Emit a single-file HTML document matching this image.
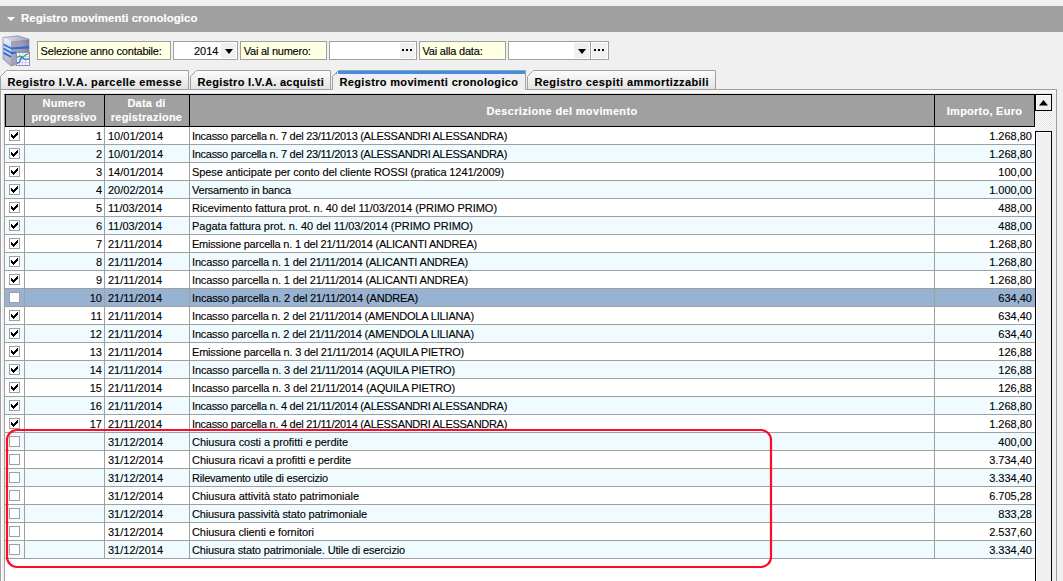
<!DOCTYPE html><html><head><meta charset="utf-8"><style>
*{margin:0;padding:0;box-sizing:border-box}
html,body{width:1063px;height:581px;overflow:hidden;background:#f0f0f0;font-family:'Liberation Sans', sans-serif;font-size:11px;color:#000}
.a{position:absolute}
.t{position:absolute;white-space:pre;line-height:13px;-webkit-text-stroke:0.12px currentColor}
.b{font-weight:bold}
</style></head><body>
<div class="a" style="left:0;top:6px;width:1063px;height:26px;background:#a0a0a0"></div>
<svg class="a" style="left:6px;top:16px" width="10" height="7"><path d="M1 1 L9 1 L5 5 Z" fill="#fff"/></svg>
<div class="t b" style="left:21px;top:12px;font-size:11.5px;color:#fff;letter-spacing:0.005px">Registro movimenti cronologico</div>
<svg class="a" style="left:0;top:32px" width="36" height="36" viewBox="0 32 36 36">
<defs><linearGradient id="gf" x1="0" x2="1" y1="0" y2="0"><stop offset="0" stop-color="#a4a4b6"/><stop offset="0.6" stop-color="#9a9ab0"/><stop offset="1" stop-color="#7c7c9c"/></linearGradient>
<linearGradient id="gs" x1="0" x2="0" y1="0" y2="1"><stop offset="0" stop-color="#f0f0fa"/><stop offset="1" stop-color="#a8a8c4"/></linearGradient>
<linearGradient id="gt" x1="0" x2="1"><stop offset="0" stop-color="#e4e4f2"/><stop offset="1" stop-color="#a0a0bc"/></linearGradient></defs>
<path d="M3 37.5 L18 35.8 L29 39.2 L11 41 Z" fill="url(#gt)"/>
<path d="M3 37.5 L11 41 L11 66 L3 59 Z" fill="url(#gs)"/>
<path d="M11 41 L29 39.2 L29 61 L11 66 Z" fill="url(#gf)"/>
<path d="M3 37.5 L18 35.8 L29 39.2 L29 61 L11 66 L3 59 Z" fill="none" stroke="#7a7a98" stroke-width="0.6"/>
<path d="M3.5 43.5 L11 47.5 L11 49 L3.5 45.5 Z M3.5 47.5 L11 51.8 L11 53.5 L3.5 49.5 Z M3.5 51.8 L11 56 L11 57.8 L3.5 54 Z" fill="#1a6ee6"/>
<path d="M11 47.5 L29 46.2 L29 48.6 L11 49.2 Z M11 52 L17 51.7 L17 53.6 L11 54 Z" fill="#1a6ee6"/>
<path d="M11 45 L29 44 M11 50.5 L29 50 M11 55.5 L17 55.2" stroke="#c0a0a0" stroke-width="0.5"/>
<rect x="16.5" y="52.5" width="13" height="13" fill="#f6f6fc" stroke="#9090b0"/>
<path d="M19.5 53 V65 M22.5 53 V65 M25.5 53 V65 M17 56.5 H29 M17 59.5 H29 M17 62.5 H29" stroke="#c4c4dc" stroke-width="0.7"/>
<path d="M17 57.5 L20 56 L22.5 57.5 L25.5 55 L29 53.5" stroke="#2cb82c" stroke-width="1.3" fill="none"/>
<path d="M17 63.5 L19.5 62 L21.5 57 L23.5 58.5 L26 59.5 L29 58.5" stroke="#2a6ae8" stroke-width="1.3" fill="none"/>
</svg>
<div class="a" style="left:37px;top:41px;width:134px;height:19px;background:#ffffe3;border:1px solid #a0a0a0"></div>
<div class="t" style="left:40.6px;top:45px;letter-spacing:-0.199px">Selezione anno contabile:</div>
<div class="a" style="left:173px;top:41px;width:65px;height:19px;background:#fff;border:1px solid #a0a0a0"></div>
<div class="t" style="left:194px;top:45px;width:24px;text-align:right">2014</div>
<div class="a" style="left:221px;top:43px;width:15px;height:15px;background:#f0f0f0"></div>
<svg class="a" style="left:225px;top:49px" width="8" height="5"><path d="M0 0 H8 L4 5 Z" fill="#000"/></svg>
<div class="a" style="left:240px;top:41px;width:87px;height:19px;background:#ffffe3;border:1px solid #a0a0a0"></div>
<div class="t" style="left:243.7px;top:45px;letter-spacing:-0.222px">Vai al numero:</div>
<div class="a" style="left:329px;top:41px;width:88px;height:19px;background:#fff;border:1px solid #a0a0a0"></div>
<div class="a" style="left:400px;top:43px;width:15px;height:15px;background:#f0f0f0"></div>
<div class="a" style="left:402px;top:49px;width:2px;height:2px;background:#000"></div>
<div class="a" style="left:406px;top:49px;width:2px;height:2px;background:#000"></div>
<div class="a" style="left:410px;top:49px;width:2px;height:2px;background:#000"></div>
<div class="a" style="left:419px;top:41px;width:87px;height:19px;background:#ffffe3;border:1px solid #a0a0a0"></div>
<div class="t" style="left:422.5px;top:45px;letter-spacing:-0.198px">Vai alla data:</div>
<div class="a" style="left:508px;top:41px;width:101px;height:19px;background:#fff;border:1px solid #a0a0a0"></div>
<div class="a" style="left:590px;top:41px;width:1px;height:19px;background:#a0a0a0"></div>
<div class="a" style="left:574px;top:43px;width:15px;height:15px;background:#f0f0f0"></div>
<svg class="a" style="left:578px;top:49px" width="8" height="5"><path d="M0 0 H8 L4 5 Z" fill="#000"/></svg>
<div class="a" style="left:592px;top:43px;width:15px;height:15px;background:#f0f0f0"></div>
<div class="a" style="left:594px;top:49px;width:2px;height:2px;background:#000"></div>
<div class="a" style="left:598px;top:49px;width:2px;height:2px;background:#000"></div>
<div class="a" style="left:602px;top:49px;width:2px;height:2px;background:#000"></div>
<div class="a" style="left:0;top:89px;width:1057px;height:500px;border:1px solid #a0a0a0;background:#f0f0f0"></div>
<div class="a" style="left:1px;top:90px;width:1055px;height:500px;border-left:1px solid #fff"></div>
<div class="a" style="left:1px;top:90px;width:1055px;height:3px;background:#f8f8f8"></div>
<div class="a" style="left:4px;top:93px;width:1049px;height:1px;background:#e4e4e4"></div>
<svg class="a" style="left:0px;top:70px" width="189" height="20"><defs><linearGradient id="tg0" x1="0" x2="0" y1="0" y2="1"><stop offset="0" stop-color="#fdfdfd"/><stop offset="1" stop-color="#e2e2e2"/></linearGradient></defs><path d="M0.5 19.5 V6.5 L6.5 0.5 H188.5 V19.5 Z" fill="url(#tg0)" stroke="#a0a0a0"/></svg>
<div class="t b" style="left:7.5px;top:76px;letter-spacing:0.396px">Registro I.V.A. parcelle emesse</div>
<svg class="a" style="left:190px;top:70px" width="141" height="20"><defs><linearGradient id="tg190" x1="0" x2="0" y1="0" y2="1"><stop offset="0" stop-color="#fdfdfd"/><stop offset="1" stop-color="#e2e2e2"/></linearGradient></defs><path d="M0.5 19.5 V6.5 L6.5 0.5 H140.5 V19.5 Z" fill="url(#tg190)" stroke="#a0a0a0"/></svg>
<div class="t b" style="left:197.5px;top:76px;letter-spacing:0.325px">Registro I.V.A. acquisti</div>
<svg class="a" style="left:527px;top:70px" width="189" height="20"><defs><linearGradient id="tg527" x1="0" x2="0" y1="0" y2="1"><stop offset="0" stop-color="#fdfdfd"/><stop offset="1" stop-color="#e2e2e2"/></linearGradient></defs><path d="M0.5 19.5 V6.5 L6.5 0.5 H188.5 V19.5 Z" fill="url(#tg527)" stroke="#a0a0a0"/></svg>
<div class="t b" style="left:534.5px;top:76px;letter-spacing:0.404px">Registro cespiti ammortizzabili</div>
<div class="a" style="left:333px;top:89px;width:192px;height:4px;background:#f4f4f4"></div><svg class="a" style="left:332px;top:70px" width="194" height="24"><path d="M0.5 19.5 V6.5 L6.5 0.5 H193.5 V19.5" fill="#f0f0f0" stroke="#a0a0a0"/><rect x="6" y="1" width="187" height="3" fill="#3d8ee8"/><path d="M3 4 L5 2 V4 Z" fill="#3d8ee8"/></svg>
<div class="t b" style="left:339.5px;top:76px;letter-spacing:0.337px">Registro movimenti cronologico</div>
<div class="a" style="left:4px;top:94px;width:1048px;height:490px;background:#fff;border:1px solid #000;border-left-color:#a0a0a0;border-bottom:0"></div>
<div class="a" style="left:5px;top:95px;width:1030px;height:32px;background:#a0a0a0;border-bottom:1px solid #000;border-left:1px solid #000"></div>
<div class="a" style="left:24px;top:95px;width:1px;height:32px;background:#000"></div>
<div class="a" style="left:104px;top:95px;width:1px;height:32px;background:#000"></div>
<div class="a" style="left:189px;top:95px;width:1px;height:32px;background:#000"></div>
<div class="a" style="left:934px;top:95px;width:1px;height:32px;background:#000"></div>
<div class="a" style="left:1034px;top:95px;width:1px;height:32px;background:#000"></div>
<div class="t b" style="left:42.5px;top:97px;color:#fff;letter-spacing:0.252px">Numero</div>
<div class="t b" style="left:31.4px;top:111px;color:#fff;letter-spacing:0.212px">progressivo</div>
<div class="t b" style="left:127.4px;top:97px;color:#fff;letter-spacing:0.224px">Data di</div>
<div class="t b" style="left:110.8px;top:111px;color:#fff;letter-spacing:0.225px">registrazione</div>
<div class="t b" style="left:486.5px;top:105px;color:#fff;letter-spacing:0.343px">Descrizione del movimento</div>
<div class="t b" style="left:946.8px;top:105px;color:#fff;letter-spacing:0.249px">Importo, Euro</div>
<div class="a" style="left:5px;top:127px;width:1030px;height:18px;background:#fff;border-bottom:1px solid #a0a0a0"></div>
<div class="a" style="left:9px;top:130px;width:11px;height:11px;background:#fff;border:1px solid #a0a0a0"></div>
<svg class="a" style="left:11px;top:132px" width="7" height="7" shape-rendering="crispEdges"><path d="M0 2h1v3h-1z M1 3h1v3h-1z M2 4h1v3h-1z M3 3h1v3h-1z M4 2h1v3h-1z M5 1h1v3h-1z M6 0h1v3h-1z" fill="#000"/></svg>
<div class="t" style="left:40px;top:130px;width:62px;text-align:right">1</div>
<div class="t" style="left:108px;top:130px">10/01/2014</div>
<div class="t" style="left:192px;top:130px;letter-spacing:-0.290px">Incasso parcella n. 7 del 23/11/2013 (ALESSANDRI ALESSANDRA)</div>
<div class="t" style="left:940px;top:130px;width:92px;text-align:right">1.268,80</div>
<div class="a" style="left:5px;top:145px;width:1030px;height:18px;background:#effbff;border-bottom:1px solid #a0a0a0"></div>
<div class="a" style="left:9px;top:148px;width:11px;height:11px;background:#fff;border:1px solid #a0a0a0"></div>
<svg class="a" style="left:11px;top:150px" width="7" height="7" shape-rendering="crispEdges"><path d="M0 2h1v3h-1z M1 3h1v3h-1z M2 4h1v3h-1z M3 3h1v3h-1z M4 2h1v3h-1z M5 1h1v3h-1z M6 0h1v3h-1z" fill="#000"/></svg>
<div class="t" style="left:40px;top:148px;width:62px;text-align:right">2</div>
<div class="t" style="left:108px;top:148px">10/01/2014</div>
<div class="t" style="left:192px;top:148px;letter-spacing:-0.290px">Incasso parcella n. 7 del 23/11/2013 (ALESSANDRI ALESSANDRA)</div>
<div class="t" style="left:940px;top:148px;width:92px;text-align:right">1.268,80</div>
<div class="a" style="left:5px;top:163px;width:1030px;height:18px;background:#fff;border-bottom:1px solid #a0a0a0"></div>
<div class="a" style="left:9px;top:166px;width:11px;height:11px;background:#fff;border:1px solid #a0a0a0"></div>
<svg class="a" style="left:11px;top:168px" width="7" height="7" shape-rendering="crispEdges"><path d="M0 2h1v3h-1z M1 3h1v3h-1z M2 4h1v3h-1z M3 3h1v3h-1z M4 2h1v3h-1z M5 1h1v3h-1z M6 0h1v3h-1z" fill="#000"/></svg>
<div class="t" style="left:40px;top:166px;width:62px;text-align:right">3</div>
<div class="t" style="left:108px;top:166px">14/01/2014</div>
<div class="t" style="left:192px;top:166px;letter-spacing:-0.103px">Spese anticipate per conto del cliente ROSSI (pratica 1241/2009)</div>
<div class="t" style="left:940px;top:166px;width:92px;text-align:right">100,00</div>
<div class="a" style="left:5px;top:181px;width:1030px;height:18px;background:#effbff;border-bottom:1px solid #a0a0a0"></div>
<div class="a" style="left:9px;top:184px;width:11px;height:11px;background:#fff;border:1px solid #a0a0a0"></div>
<svg class="a" style="left:11px;top:186px" width="7" height="7" shape-rendering="crispEdges"><path d="M0 2h1v3h-1z M1 3h1v3h-1z M2 4h1v3h-1z M3 3h1v3h-1z M4 2h1v3h-1z M5 1h1v3h-1z M6 0h1v3h-1z" fill="#000"/></svg>
<div class="t" style="left:40px;top:184px;width:62px;text-align:right">4</div>
<div class="t" style="left:108px;top:184px">20/02/2014</div>
<div class="t" style="left:192px;top:184px;letter-spacing:-0.229px">Versamento in banca</div>
<div class="t" style="left:940px;top:184px;width:92px;text-align:right">1.000,00</div>
<div class="a" style="left:5px;top:199px;width:1030px;height:18px;background:#fff;border-bottom:1px solid #a0a0a0"></div>
<div class="a" style="left:9px;top:202px;width:11px;height:11px;background:#fff;border:1px solid #a0a0a0"></div>
<svg class="a" style="left:11px;top:204px" width="7" height="7" shape-rendering="crispEdges"><path d="M0 2h1v3h-1z M1 3h1v3h-1z M2 4h1v3h-1z M3 3h1v3h-1z M4 2h1v3h-1z M5 1h1v3h-1z M6 0h1v3h-1z" fill="#000"/></svg>
<div class="t" style="left:40px;top:202px;width:62px;text-align:right">5</div>
<div class="t" style="left:108px;top:202px">11/03/2014</div>
<div class="t" style="left:192px;top:202px;letter-spacing:-0.049px">Ricevimento fattura prot. n. 40 del 11/03/2014 (PRIMO PRIMO)</div>
<div class="t" style="left:940px;top:202px;width:92px;text-align:right">488,00</div>
<div class="a" style="left:5px;top:217px;width:1030px;height:18px;background:#effbff;border-bottom:1px solid #a0a0a0"></div>
<div class="a" style="left:9px;top:220px;width:11px;height:11px;background:#fff;border:1px solid #a0a0a0"></div>
<svg class="a" style="left:11px;top:222px" width="7" height="7" shape-rendering="crispEdges"><path d="M0 2h1v3h-1z M1 3h1v3h-1z M2 4h1v3h-1z M3 3h1v3h-1z M4 2h1v3h-1z M5 1h1v3h-1z M6 0h1v3h-1z" fill="#000"/></svg>
<div class="t" style="left:40px;top:220px;width:62px;text-align:right">6</div>
<div class="t" style="left:108px;top:220px">11/03/2014</div>
<div class="t" style="left:192px;top:220px;letter-spacing:-0.023px">Pagata fattura prot. n. 40 del 11/03/2014 (PRIMO PRIMO)</div>
<div class="t" style="left:940px;top:220px;width:92px;text-align:right">488,00</div>
<div class="a" style="left:5px;top:235px;width:1030px;height:18px;background:#fff;border-bottom:1px solid #a0a0a0"></div>
<div class="a" style="left:9px;top:238px;width:11px;height:11px;background:#fff;border:1px solid #a0a0a0"></div>
<svg class="a" style="left:11px;top:240px" width="7" height="7" shape-rendering="crispEdges"><path d="M0 2h1v3h-1z M1 3h1v3h-1z M2 4h1v3h-1z M3 3h1v3h-1z M4 2h1v3h-1z M5 1h1v3h-1z M6 0h1v3h-1z" fill="#000"/></svg>
<div class="t" style="left:40px;top:238px;width:62px;text-align:right">7</div>
<div class="t" style="left:108px;top:238px">21/11/2014</div>
<div class="t" style="left:192px;top:238px;letter-spacing:-0.213px">Emissione parcella n. 1 del 21/11/2014 (ALICANTI ANDREA)</div>
<div class="t" style="left:940px;top:238px;width:92px;text-align:right">1.268,80</div>
<div class="a" style="left:5px;top:253px;width:1030px;height:18px;background:#effbff;border-bottom:1px solid #a0a0a0"></div>
<div class="a" style="left:9px;top:256px;width:11px;height:11px;background:#fff;border:1px solid #a0a0a0"></div>
<svg class="a" style="left:11px;top:258px" width="7" height="7" shape-rendering="crispEdges"><path d="M0 2h1v3h-1z M1 3h1v3h-1z M2 4h1v3h-1z M3 3h1v3h-1z M4 2h1v3h-1z M5 1h1v3h-1z M6 0h1v3h-1z" fill="#000"/></svg>
<div class="t" style="left:40px;top:256px;width:62px;text-align:right">8</div>
<div class="t" style="left:108px;top:256px">21/11/2014</div>
<div class="t" style="left:192px;top:256px;letter-spacing:-0.150px">Incasso parcella n. 1 del 21/11/2014 (ALICANTI ANDREA)</div>
<div class="t" style="left:940px;top:256px;width:92px;text-align:right">1.268,80</div>
<div class="a" style="left:5px;top:271px;width:1030px;height:18px;background:#fff;border-bottom:1px solid #a0a0a0"></div>
<div class="a" style="left:9px;top:274px;width:11px;height:11px;background:#fff;border:1px solid #a0a0a0"></div>
<svg class="a" style="left:11px;top:276px" width="7" height="7" shape-rendering="crispEdges"><path d="M0 2h1v3h-1z M1 3h1v3h-1z M2 4h1v3h-1z M3 3h1v3h-1z M4 2h1v3h-1z M5 1h1v3h-1z M6 0h1v3h-1z" fill="#000"/></svg>
<div class="t" style="left:40px;top:274px;width:62px;text-align:right">9</div>
<div class="t" style="left:108px;top:274px">21/11/2014</div>
<div class="t" style="left:192px;top:274px;letter-spacing:-0.150px">Incasso parcella n. 1 del 21/11/2014 (ALICANTI ANDREA)</div>
<div class="t" style="left:940px;top:274px;width:92px;text-align:right">1.268,80</div>
<div class="a" style="left:5px;top:289px;width:1030px;height:18px;background:#98b2d2;border-bottom:1px solid #a0a0a0"></div>
<div class="a" style="left:9px;top:292px;width:11px;height:11px;background:#fff;border:1px solid #a0a0a0"></div>
<div class="t" style="left:40px;top:292px;width:62px;text-align:right">10</div>
<div class="t" style="left:108px;top:292px">21/11/2014</div>
<div class="t" style="left:192px;top:292px;letter-spacing:-0.137px">Incasso parcella n. 2 del 21/11/2014 (ANDREA)</div>
<div class="t" style="left:940px;top:292px;width:92px;text-align:right">634,40</div>
<div class="a" style="left:5px;top:307px;width:1030px;height:18px;background:#fff;border-bottom:1px solid #a0a0a0"></div>
<div class="a" style="left:9px;top:310px;width:11px;height:11px;background:#fff;border:1px solid #a0a0a0"></div>
<svg class="a" style="left:11px;top:312px" width="7" height="7" shape-rendering="crispEdges"><path d="M0 2h1v3h-1z M1 3h1v3h-1z M2 4h1v3h-1z M3 3h1v3h-1z M4 2h1v3h-1z M5 1h1v3h-1z M6 0h1v3h-1z" fill="#000"/></svg>
<div class="t" style="left:40px;top:310px;width:62px;text-align:right">11</div>
<div class="t" style="left:108px;top:310px">21/11/2014</div>
<div class="t" style="left:192px;top:310px;letter-spacing:-0.172px">Incasso parcella n. 2 del 21/11/2014 (AMENDOLA LILIANA)</div>
<div class="t" style="left:940px;top:310px;width:92px;text-align:right">634,40</div>
<div class="a" style="left:5px;top:325px;width:1030px;height:18px;background:#effbff;border-bottom:1px solid #a0a0a0"></div>
<div class="a" style="left:9px;top:328px;width:11px;height:11px;background:#fff;border:1px solid #a0a0a0"></div>
<svg class="a" style="left:11px;top:330px" width="7" height="7" shape-rendering="crispEdges"><path d="M0 2h1v3h-1z M1 3h1v3h-1z M2 4h1v3h-1z M3 3h1v3h-1z M4 2h1v3h-1z M5 1h1v3h-1z M6 0h1v3h-1z" fill="#000"/></svg>
<div class="t" style="left:40px;top:328px;width:62px;text-align:right">12</div>
<div class="t" style="left:108px;top:328px">21/11/2014</div>
<div class="t" style="left:192px;top:328px;letter-spacing:-0.172px">Incasso parcella n. 2 del 21/11/2014 (AMENDOLA LILIANA)</div>
<div class="t" style="left:940px;top:328px;width:92px;text-align:right">634,40</div>
<div class="a" style="left:5px;top:343px;width:1030px;height:18px;background:#fff;border-bottom:1px solid #a0a0a0"></div>
<div class="a" style="left:9px;top:346px;width:11px;height:11px;background:#fff;border:1px solid #a0a0a0"></div>
<svg class="a" style="left:11px;top:348px" width="7" height="7" shape-rendering="crispEdges"><path d="M0 2h1v3h-1z M1 3h1v3h-1z M2 4h1v3h-1z M3 3h1v3h-1z M4 2h1v3h-1z M5 1h1v3h-1z M6 0h1v3h-1z" fill="#000"/></svg>
<div class="t" style="left:40px;top:346px;width:62px;text-align:right">13</div>
<div class="t" style="left:108px;top:346px">21/11/2014</div>
<div class="t" style="left:192px;top:346px;letter-spacing:-0.202px">Emissione parcella n. 3 del 21/11/2014 (AQUILA PIETRO)</div>
<div class="t" style="left:940px;top:346px;width:92px;text-align:right">126,88</div>
<div class="a" style="left:5px;top:361px;width:1030px;height:18px;background:#effbff;border-bottom:1px solid #a0a0a0"></div>
<div class="a" style="left:9px;top:364px;width:11px;height:11px;background:#fff;border:1px solid #a0a0a0"></div>
<svg class="a" style="left:11px;top:366px" width="7" height="7" shape-rendering="crispEdges"><path d="M0 2h1v3h-1z M1 3h1v3h-1z M2 4h1v3h-1z M3 3h1v3h-1z M4 2h1v3h-1z M5 1h1v3h-1z M6 0h1v3h-1z" fill="#000"/></svg>
<div class="t" style="left:40px;top:364px;width:62px;text-align:right">14</div>
<div class="t" style="left:108px;top:364px">21/11/2014</div>
<div class="t" style="left:192px;top:364px;letter-spacing:-0.136px">Incasso parcella n. 3 del 21/11/2014 (AQUILA PIETRO)</div>
<div class="t" style="left:940px;top:364px;width:92px;text-align:right">126,88</div>
<div class="a" style="left:5px;top:379px;width:1030px;height:18px;background:#fff;border-bottom:1px solid #a0a0a0"></div>
<div class="a" style="left:9px;top:382px;width:11px;height:11px;background:#fff;border:1px solid #a0a0a0"></div>
<svg class="a" style="left:11px;top:384px" width="7" height="7" shape-rendering="crispEdges"><path d="M0 2h1v3h-1z M1 3h1v3h-1z M2 4h1v3h-1z M3 3h1v3h-1z M4 2h1v3h-1z M5 1h1v3h-1z M6 0h1v3h-1z" fill="#000"/></svg>
<div class="t" style="left:40px;top:382px;width:62px;text-align:right">15</div>
<div class="t" style="left:108px;top:382px">21/11/2014</div>
<div class="t" style="left:192px;top:382px;letter-spacing:-0.136px">Incasso parcella n. 3 del 21/11/2014 (AQUILA PIETRO)</div>
<div class="t" style="left:940px;top:382px;width:92px;text-align:right">126,88</div>
<div class="a" style="left:5px;top:397px;width:1030px;height:18px;background:#effbff;border-bottom:1px solid #a0a0a0"></div>
<div class="a" style="left:9px;top:400px;width:11px;height:11px;background:#fff;border:1px solid #a0a0a0"></div>
<svg class="a" style="left:11px;top:402px" width="7" height="7" shape-rendering="crispEdges"><path d="M0 2h1v3h-1z M1 3h1v3h-1z M2 4h1v3h-1z M3 3h1v3h-1z M4 2h1v3h-1z M5 1h1v3h-1z M6 0h1v3h-1z" fill="#000"/></svg>
<div class="t" style="left:40px;top:400px;width:62px;text-align:right">16</div>
<div class="t" style="left:108px;top:400px">21/11/2014</div>
<div class="t" style="left:192px;top:400px;letter-spacing:-0.290px">Incasso parcella n. 4 del 21/11/2014 (ALESSANDRI ALESSANDRA)</div>
<div class="t" style="left:940px;top:400px;width:92px;text-align:right">1.268,80</div>
<div class="a" style="left:5px;top:415px;width:1030px;height:18px;background:#fff;border-bottom:1px solid #a0a0a0"></div>
<div class="a" style="left:9px;top:418px;width:11px;height:11px;background:#fff;border:1px solid #a0a0a0"></div>
<svg class="a" style="left:11px;top:420px" width="7" height="7" shape-rendering="crispEdges"><path d="M0 2h1v3h-1z M1 3h1v3h-1z M2 4h1v3h-1z M3 3h1v3h-1z M4 2h1v3h-1z M5 1h1v3h-1z M6 0h1v3h-1z" fill="#000"/></svg>
<div class="t" style="left:40px;top:418px;width:62px;text-align:right">17</div>
<div class="t" style="left:108px;top:418px">21/11/2014</div>
<div class="t" style="left:192px;top:418px;letter-spacing:-0.290px">Incasso parcella n. 4 del 21/11/2014 (ALESSANDRI ALESSANDRA)</div>
<div class="t" style="left:940px;top:418px;width:92px;text-align:right">1.268,80</div>
<div class="a" style="left:5px;top:433px;width:1030px;height:18px;background:#effbff;border-bottom:1px solid #a0a0a0"></div>
<div class="a" style="left:9px;top:436px;width:11px;height:11px;background:#fff;border:1px solid #a0a0a0"></div>
<div class="t" style="left:108px;top:436px">31/12/2014</div>
<div class="t" style="left:192px;top:436px;letter-spacing:-0.050px">Chiusura costi a profitti e perdite</div>
<div class="t" style="left:940px;top:436px;width:92px;text-align:right">400,00</div>
<div class="a" style="left:5px;top:451px;width:1030px;height:18px;background:#fff;border-bottom:1px solid #a0a0a0"></div>
<div class="a" style="left:9px;top:454px;width:11px;height:11px;background:#fff;border:1px solid #a0a0a0"></div>
<div class="t" style="left:108px;top:454px">31/12/2014</div>
<div class="t" style="left:192px;top:454px;letter-spacing:-0.050px">Chiusura ricavi a profitti e perdite</div>
<div class="t" style="left:940px;top:454px;width:92px;text-align:right">3.734,40</div>
<div class="a" style="left:5px;top:469px;width:1030px;height:18px;background:#effbff;border-bottom:1px solid #a0a0a0"></div>
<div class="a" style="left:9px;top:472px;width:11px;height:11px;background:#fff;border:1px solid #a0a0a0"></div>
<div class="t" style="left:108px;top:472px">31/12/2014</div>
<div class="t" style="left:192px;top:472px;letter-spacing:-0.215px">Rilevamento utile di esercizio</div>
<div class="t" style="left:940px;top:472px;width:92px;text-align:right">3.334,40</div>
<div class="a" style="left:5px;top:487px;width:1030px;height:18px;background:#fff;border-bottom:1px solid #a0a0a0"></div>
<div class="a" style="left:9px;top:490px;width:11px;height:11px;background:#fff;border:1px solid #a0a0a0"></div>
<div class="t" style="left:108px;top:490px">31/12/2014</div>
<div class="t" style="left:192px;top:490px;letter-spacing:-0.049px">Chiusura attività stato patrimoniale</div>
<div class="t" style="left:940px;top:490px;width:92px;text-align:right">6.705,28</div>
<div class="a" style="left:5px;top:505px;width:1030px;height:18px;background:#effbff;border-bottom:1px solid #a0a0a0"></div>
<div class="a" style="left:9px;top:508px;width:11px;height:11px;background:#fff;border:1px solid #a0a0a0"></div>
<div class="t" style="left:108px;top:508px">31/12/2014</div>
<div class="t" style="left:192px;top:508px;letter-spacing:-0.129px">Chiusura passività stato patrimoniale</div>
<div class="t" style="left:940px;top:508px;width:92px;text-align:right">833,28</div>
<div class="a" style="left:5px;top:523px;width:1030px;height:18px;background:#fff;border-bottom:1px solid #a0a0a0"></div>
<div class="a" style="left:9px;top:526px;width:11px;height:11px;background:#fff;border:1px solid #a0a0a0"></div>
<div class="t" style="left:108px;top:526px">31/12/2014</div>
<div class="t" style="left:192px;top:526px;letter-spacing:-0.076px">Chiusura clienti e fornitori</div>
<div class="t" style="left:940px;top:526px;width:92px;text-align:right">2.537,60</div>
<div class="a" style="left:5px;top:541px;width:1030px;height:18px;background:#effbff;border-bottom:1px solid #a0a0a0"></div>
<div class="a" style="left:9px;top:544px;width:11px;height:11px;background:#fff;border:1px solid #a0a0a0"></div>
<div class="t" style="left:108px;top:544px">31/12/2014</div>
<div class="t" style="left:192px;top:544px;letter-spacing:-0.151px">Chiusura stato patrimoniale. Utile di esercizio</div>
<div class="t" style="left:940px;top:544px;width:92px;text-align:right">3.334,40</div>
<div class="a" style="left:24px;top:127px;width:1px;height:432px;background:#a0a0a0"></div>
<div class="a" style="left:104px;top:127px;width:1px;height:432px;background:#a0a0a0"></div>
<div class="a" style="left:189px;top:127px;width:1px;height:432px;background:#a0a0a0"></div>
<div class="a" style="left:934px;top:127px;width:1px;height:432px;background:#a0a0a0"></div>
<div class="a" style="left:1035px;top:95px;width:17px;height:16px;background:#f0f0f0;border-right:1px solid #000;border-bottom:1px solid #000"></div>
<div class="a" style="left:1035px;top:95px;width:1px;height:16px;background:#000"></div>
<div class="a" style="left:1036px;top:95px;width:15px;height:1px;background:#fff"></div>
<div class="a" style="left:1036px;top:95px;width:1px;height:15px;background:#fff"></div>
<svg class="a" style="left:1039px;top:100px" width="10" height="6"><path d="M0 5.5 L4.5 0 L9 5.5 Z" fill="#000"/></svg>
<div class="a" style="left:1035px;top:111px;width:17px;height:20px;background:repeating-conic-gradient(#fff 0% 25%,#e2e2e2 0% 50%) 0 0/2px 2px"></div>
<div class="a" style="left:1035px;top:131px;width:17px;height:460px;background:#f0f0f0;border:1px solid #000"></div>
<div class="a" style="left:1036px;top:132px;width:15px;height:1px;background:#fff"></div>
<div class="a" style="left:1036px;top:132px;width:1px;height:460px;background:#fff"></div>
<svg class="a" style="left:0;top:0" width="1063" height="581"><rect x="7" y="430" width="764" height="137" rx="10" fill="none" stroke="#ff0a28" stroke-width="2.2"/></svg>
</body></html>
